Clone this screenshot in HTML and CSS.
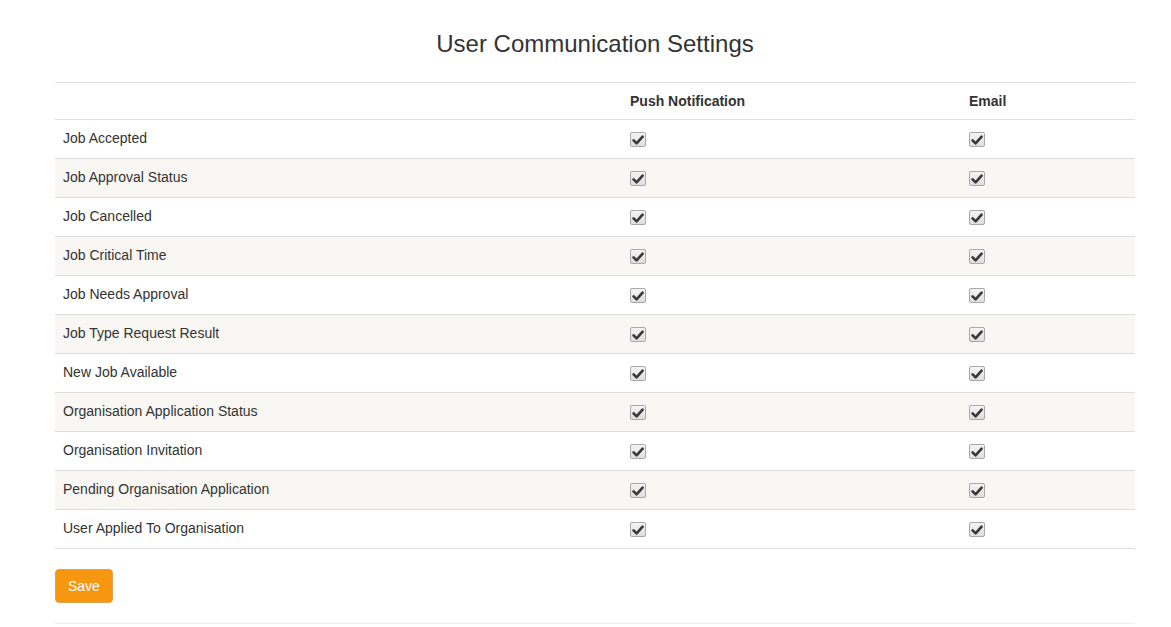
FILE: index.html
```html
<!DOCTYPE html>
<html lang="en">
<head>
  <meta charset="UTF-8" />
  <title>User Communication Settings</title>
  <link rel="stylesheet" href="styles.css">
</head>
<body>
  <main class="page">
    <h1 class="page-title">User Communication Settings</h1>

    <table class="settings-table">
      <thead>
        <tr>
          <th class="col-name"></th>
          <th class="col-push">Push Notification</th>
          <th class="col-email">Email</th>
        </tr>
      </thead>
      <tbody id="settingsBody">
        <!-- rows are added by the script below -->
      </tbody>
    </table>

    <button class="btn-save">Save</button>
    <hr class="divider">
  </main>

  <script>
    const events = [
      "Job Accepted",
      "Job Approval Status",
      "Job Cancelled",
      "Job Critical Time",
      "Job Needs Approval",
      "Job Type Request Result",
      "New Job Available",
      "Organisation Application Status",
      "Organisation Invitation",
      "Pending Organisation Application",
      "User Applied To Organisation"
    ];

    const checkbox = `
      <span class="check">
        <svg width="12" height="12" viewBox="0 0 12 12">
          <path d="M1.6 6.4 L4.6 9.4 L10.6 2.6" fill="none" stroke="#383838" stroke-width="2.6" stroke-linecap="round" stroke-linejoin="round"/>
        </svg>
      </span>`;

    const body = document.getElementById("settingsBody");
    events.forEach(function (name) {
      const row = document.createElement("tr");
      row.innerHTML = `<td>${name}</td><td>${checkbox}</td><td>${checkbox}</td>`;
      body.appendChild(row);
    });
  </script>
</body>
</html>
```

FILE: styles.css
```css
* {
  box-sizing: border-box;
}

body {
  margin: 0;
  font-family: "Liberation Sans", Arial, sans-serif;
  font-size: 14px;
  color: #333;
  background: #fff;
}

.page {
  width: 1080px;
  margin-left: 55px;
}

.page-title {
  margin: 31px 0 25px;
  font-size: 24px;
  font-weight: normal;
  line-height: 26px;
  text-align: center;
}

.settings-table {
  width: 100%;
  border-collapse: collapse;
  margin-bottom: 20px;
}

.settings-table th,
.settings-table td {
  padding: 8px;
  text-align: left;
  border-top: 1px solid #ddd;
}

.settings-table th {
  font-weight: bold;
  line-height: 20px;
}

.settings-table td {
  padding: 7px 8px 9px;
  line-height: 22px;
  vertical-align: top;
}

.settings-table tbody tr:last-child td {
  border-bottom: 1px solid #ddd;
}

.settings-table tbody tr:nth-child(even) {
  background-color: #f8f7f4;
}

.col-name {
  width: 567px;
}

.col-push {
  width: 339px;
}

.check {
  display: inline-block;
  width: 16px;
  height: 15px;
  margin-top: 5px;
  vertical-align: top;
  border: 1px solid #a9a9a9;
  border-radius: 2px;
  background: linear-gradient(#f4f4f4, #dedede);
  text-align: center;
  line-height: 0;
}

.check svg {
  margin-top: 1px;
}

.btn-save {
  display: block;
  padding: 6px 12px;
  font-family: inherit;
  font-size: 14px;
  line-height: 20px;
  color: #fff;
  background-color: #f7960f;
  border: 1px solid #e0a050;
  border-radius: 4px;
  cursor: pointer;
}

.divider {
  margin: 20px 0 0;
  border: 0;
  border-top: 1px solid #eee;
}
```
